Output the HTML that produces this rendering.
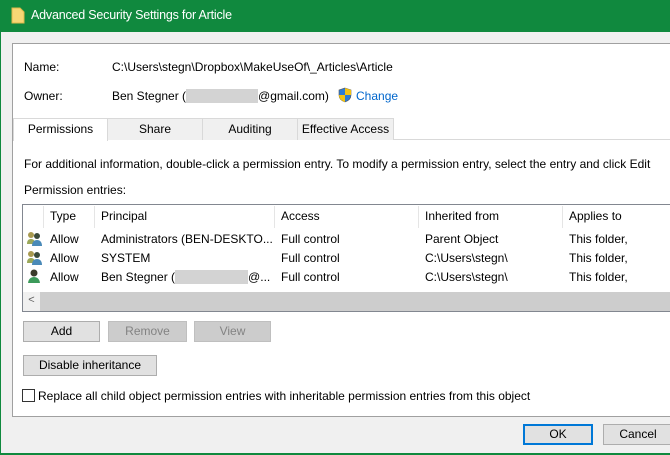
<!DOCTYPE html>
<html><head><meta charset="utf-8"><style>
*{box-sizing:border-box;margin:0;padding:0}
body{width:670px;height:455px;overflow:hidden;background:#f0f0f0;font-family:"Liberation Sans",sans-serif;font-size:12px;color:#000;position:relative;letter-spacing:0}
.a{position:absolute;white-space:nowrap}
.title{left:0;top:0;width:670px;height:32px;background:#10893e;color:#fff;font-size:12.5px;letter-spacing:-0.2px}
.btn{position:absolute;background:#e1e1e1;border:1px solid #adadad;text-align:center;line-height:19px}
.dis{color:#838383;background:#cccccc;border-color:#bfbfbf}
.tab{position:absolute;top:118px;height:22px;background:#f0f0f0;border:1px solid #d9d9d9;border-bottom:none;text-align:center;line-height:21px}
.blur{display:inline-block;background:#d3d3d3;height:14px;vertical-align:-3px}
.hd{position:absolute;top:206px;height:22px;line-height:20px;border-left:1px solid #e5e5e5;padding-left:6px}
</style></head><body>
<div class="a title">
  <svg style="position:absolute;left:11px;top:7px" width="14" height="17"><path d="M1 1h8l4 4v11H1z" fill="#f8d775" stroke="#e0b84a"/></svg>
  <span class="a" style="left:31px;top:8px">Advanced Security Settings for Article</span>
</div>
<div class="a" style="left:0;top:32px;width:1px;height:423px;background:#10893e"></div>
<div class="a" style="left:0;top:453px;width:670px;height:2px;background:#10893e"></div>
<div class="a" style="left:12px;top:43px;width:670px;height:374px;background:#fff;border:1px solid #a0a0a0"></div>
<div class="a" style="left:24px;top:60px">Name:</div>
<div class="a" style="left:112px;top:60px">C:\Users\stegn\Dropbox\MakeUseOf\_Articles\Article</div>
<div class="a" style="left:24px;top:89px">Owner:</div>
<div class="a" style="left:112px;top:89px">Ben Stegner (<span class="blur" style="width:72px"></span>@gmail.com)</div>
<svg class="a" style="left:338px;top:87px" width="14" height="16"><path d="M7 1L13 3v5c0 4-3 6-6 7C4 14 1 12 1 8V3z" fill="#2b7bd6" stroke="#555" stroke-width=".6"/><path d="M7 1v7h6V3zM7 8H1c0 4 3 6 6 7z" fill="#f3c313"/></svg>
<div class="a" style="left:356px;top:89px;color:#0066cc">Change</div>
<div class="a" style="left:13px;top:139px;width:657px;height:1px;background:#d9d9d9"></div>
<div class="tab" style="left:13px;width:95px;background:#fff;height:23px">Permissions</div>
<div class="tab" style="left:107px;width:96px">Share</div>
<div class="tab" style="left:202px;width:96px">Auditing</div>
<div class="tab" style="left:297px;width:97px">Effective Access</div>
<div class="a" style="left:24px;top:157px">For additional information, double-click a permission entry. To modify a permission entry, select the entry and click Edit</div>
<div class="a" style="left:24px;top:183px">Permission entries:</div>
<div class="a" style="left:22px;top:204px;width:660px;height:108px;border:1px solid #828790;background:#fff"></div>
<div class="hd" style="left:43px">Type</div>
<div class="hd" style="left:94px">Principal</div>
<div class="hd" style="left:274px">Access</div>
<div class="hd" style="left:418px">Inherited from</div>
<div class="hd" style="left:562px">Applies to</div>
<svg class="a" style="left:26px;top:231px" width="16" height="52">
<g><circle cx="5" cy="4" r="3" fill="#a89a50"/><path d="M1 13c0-4 2-5 4-5s4 1 4 5z" fill="#9aa85a"/><circle cx="11" cy="5" r="3" fill="#3a4a3a"/><path d="M6 15c0-4 2-6 5-6s5 2 5 6z" fill="#4a8ab8"/></g>
<g transform="translate(0,19)"><circle cx="5" cy="4" r="3" fill="#a89a50"/><path d="M1 13c0-4 2-5 4-5s4 1 4 5z" fill="#9aa85a"/><circle cx="11" cy="5" r="3" fill="#3a4a3a"/><path d="M6 15c0-4 2-6 5-6s5 2 5 6z" fill="#4a8ab8"/></g>
<g transform="translate(0,38)"><circle cx="8" cy="4" r="3.5" fill="#3a3a2a"/><path d="M2 15c0-5 3-7 6-7s6 2 6 7z" fill="#3c9a5a"/></g>
</svg>
<div class="a" style="left:50px;top:232px">Allow</div><div class="a" style="left:101px;top:232px">Administrators (BEN-DESKTO...</div><div class="a" style="left:281px;top:232px">Full control</div><div class="a" style="left:425px;top:232px">Parent Object</div><div class="a" style="left:569px;top:232px">This folder,</div>
<div class="a" style="left:50px;top:251px">Allow</div><div class="a" style="left:101px;top:251px">SYSTEM</div><div class="a" style="left:281px;top:251px">Full control</div><div class="a" style="left:425px;top:251px">C:\Users\stegn\</div><div class="a" style="left:569px;top:251px">This folder,</div>
<div class="a" style="left:50px;top:270px">Allow</div><div class="a" style="left:101px;top:270px">Ben Stegner (<span class="blur" style="width:73px"></span>@...</div><div class="a" style="left:281px;top:270px">Full control</div><div class="a" style="left:425px;top:270px">C:\Users\stegn\</div><div class="a" style="left:569px;top:270px">This folder,</div>
<div class="a" style="left:23px;top:292px;width:17px;height:19px;background:#f0f0f0;text-align:center;line-height:17px;font-size:11px;color:#606060">&lt;</div>
<div class="a" style="left:40px;top:292px;width:630px;height:19px;background:#cdcdcd"></div>
<div class="btn" style="left:23px;top:321px;width:77px;height:21px">Add</div>
<div class="btn dis" style="left:108px;top:321px;width:79px;height:21px">Remove</div>
<div class="btn dis" style="left:194px;top:321px;width:77px;height:21px">View</div>
<div class="btn" style="left:23px;top:355px;width:134px;height:21px">Disable inheritance</div>
<div class="a" style="left:22px;top:389px;width:13px;height:13px;border:1px solid #333;background:#fff"></div>
<div class="a" style="left:38px;top:389px">Replace all child object permission entries with inheritable permission entries from this object</div>
<div class="btn" style="left:523px;top:424px;width:70px;height:21px;border:2px solid #0078d7;line-height:17px">OK</div>
<div class="btn" style="left:603px;top:424px;width:70px;height:21px">Cancel</div>
</body></html>
